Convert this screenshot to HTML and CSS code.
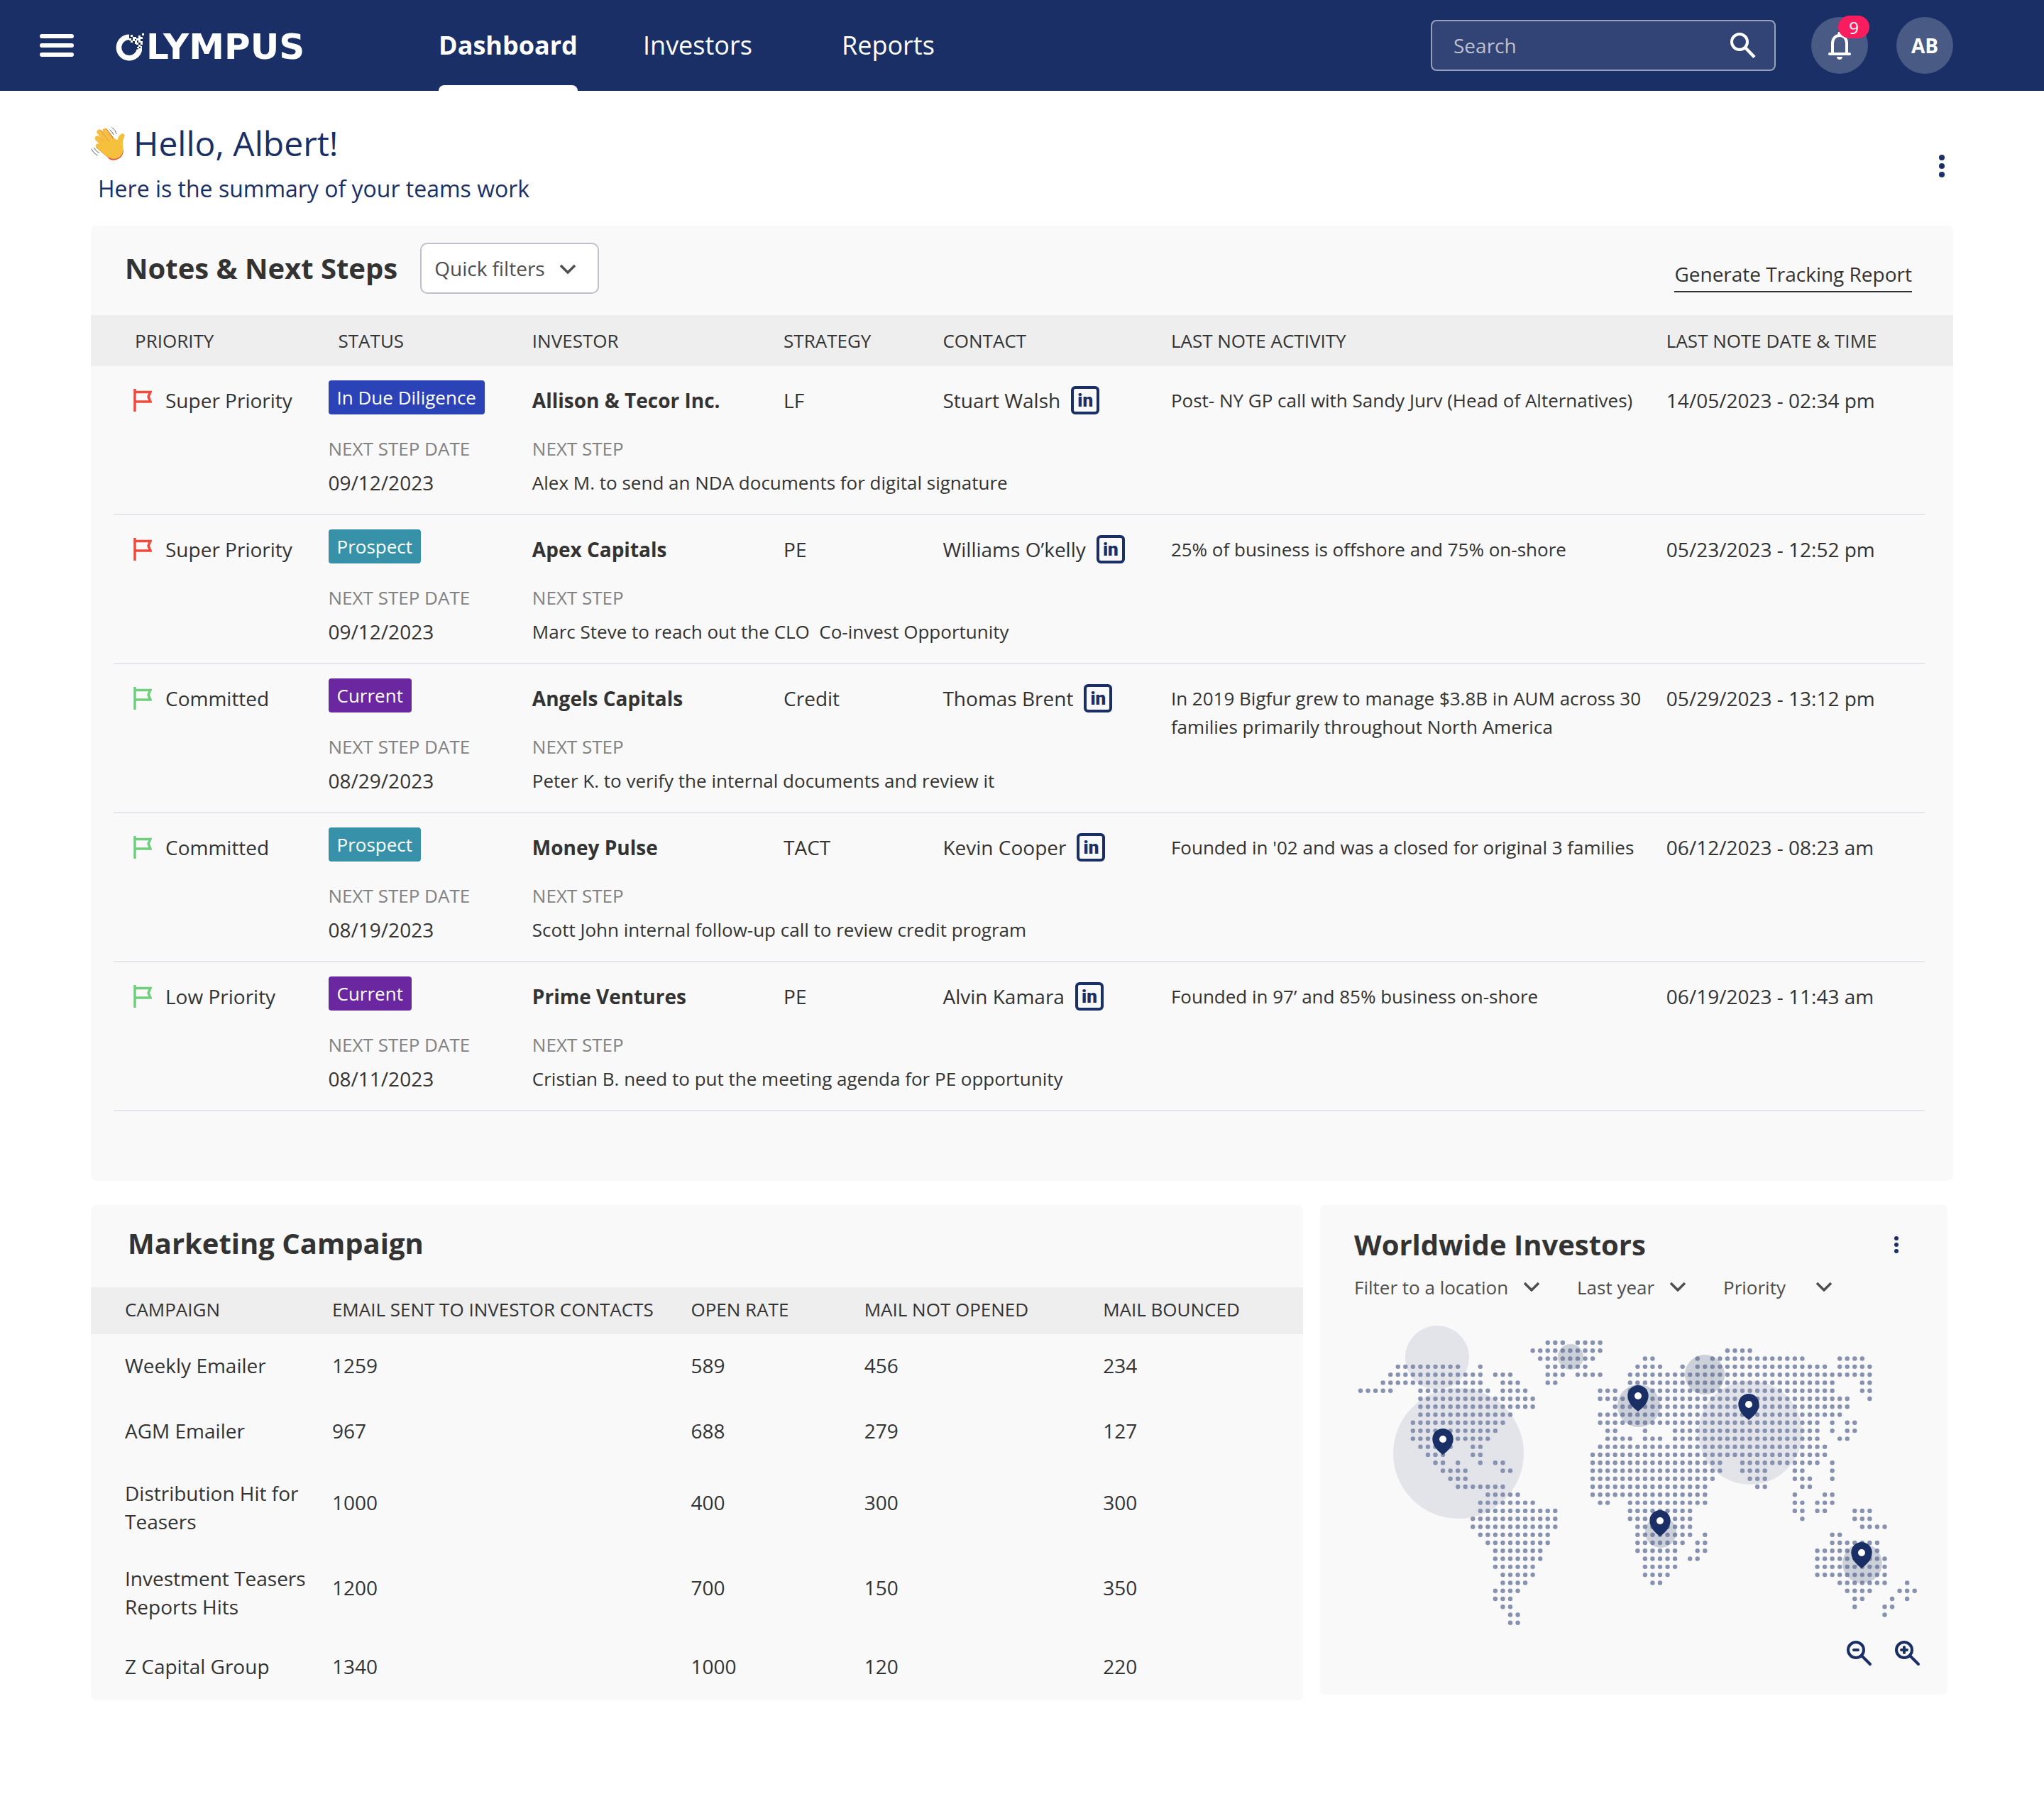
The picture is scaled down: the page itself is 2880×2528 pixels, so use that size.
FILE: index.html
```html
<!DOCTYPE html>
<html lang="en">
<head>
  <meta charset="UTF-8">
  <meta name="viewport" content="width=device-width, initial-scale=1.0">
  <title>Olympus - Dashboard</title>
  <link rel="stylesheet" href="styles.css">
</head>
<body>
  <!-- shared icons -->
  <svg class="sprite" aria-hidden="true">
    <symbol id="icon-flag" viewBox="0 0 26 32">
      <path d="M2 0v32M2 4.500h22l-3 6.500 3 7H2" fill="none" stroke="currentColor" stroke-width="3.500"/>
    </symbol>
    <symbol id="icon-chevron" viewBox="0 0 24 14">
      <path d="M2 2l10 10L22 2" fill="none" stroke="currentColor" stroke-width="3.500"/>
    </symbol>
    <symbol id="icon-dots" viewBox="0 0 8 32">
      <circle cx="4" cy="4" r="4"/><circle cx="4" cy="16" r="4"/><circle cx="4" cy="28" r="4"/>
    </symbol>
    <symbol id="icon-pin" viewBox="0 0 30 37">
      <path d="M15 0C6.800 0 0.300 6.600 0.300 14.700c0 5 2 9.300 5 13.200C8 31.300 12 34.500 15 37c3-2.500 7-5.700 9.700-9.100 3-3.900 5-8.200 5-13.200C29.700 6.600 23.200 0 15 0z" fill="#1b2f67"/>
      <circle cx="15" cy="15" r="5" fill="#fff"/>
    </symbol>
  </svg>

  <header class="topbar">
    <button class="menu-btn" type="button" aria-label="Menu">
      <span></span><span></span><span></span>
    </button>
    <a class="logo" href="#" aria-label="Olympus">
      <svg class="logo-mark" viewBox="0 0 42 42" aria-hidden="true">
        <path d="M20 7.300A14.700 14.700 0 1 0 34.500 25" fill="none" stroke="#fff" stroke-width="7.500"/>
        <path fill="#fff" d="M38 2h3v3h-3zM33 5h3v3h-3zM22 4h3v3h-3zM25 7h5v3h-5zM36 7h3v3h-3zM20 9h3v3h-3zM30 9h3v3h-3zM33 8h3v5h-3zM25 10h3v3h-3zM28 12h3v3h-3zM33 13h6v2h-6zM22 12h3v3h-3zM30 15h3v3h-3zM36 15h3v3h-3zM33 18h3v3h-3zM28 15h2v2h-2zM36 20h2v3h-2zM31 21h3v2h-3zM33 23h5v3h-5z"/>
      </svg>
      <span class="logo-text">LYMPUS</span>
    </a>
    <nav class="main-nav">
      <a class="active" href="#">Dashboard</a>
      <a href="#">Investors</a>
      <a href="#">Reports</a>
    </nav>
    <div class="search-box">
      <label class="sr-only" for="search">Search</label>
      <input type="text" id="search" placeholder="Search">
      <button type="button" aria-label="Search">
        <svg width="36" height="36" viewBox="0 0 36 36"><circle cx="13" cy="13" r="11" fill="none" stroke="#fff" stroke-width="4"/><path d="M20.500 20.500L34 34.500" stroke="#fff" stroke-width="4.500"/></svg>
      </button>
    </div>
    <button class="round-btn bell" type="button" aria-label="Notifications">
      <svg width="32" height="40" viewBox="0 0 32 40">
        <path d="M6 31V17C6 10 10.500 6 16 6s10 4 10 11v14" fill="none" stroke="#fff" stroke-width="4"/>
        <path d="M2 32h28" stroke="#fff" stroke-width="4" stroke-linecap="round"/>
        <path d="M13 6l1-5h4l1 5zM12 36h8c0 2.500-2 4-4 4s-4-1.500-4-4z" fill="#fff"/>
      </svg>
      <span class="count">9</span>
    </button>
    <button class="round-btn avatar" type="button">AB</button>
  </header>

  <main class="page">
    <section class="greeting">
      <div>
        <h1>
          <svg class="wave" viewBox="24 28 150 148" aria-hidden="true">
            <path d="M118 173c24 0 43-16 44-42l-8-10-60 40c8 8 15 12 24 12z" fill="#ef4f3c"/>
            <g stroke="#ef4f3c" stroke-width="20" stroke-linecap="round">
              <path d="M61 54l40 54M85 49l36 48M53 82l42 42M56 115l40 34"/>
            </g>
            <g stroke="#f5c03c" stroke-width="19" stroke-linecap="round" fill="#f5c03c">
              <path d="M59 54l42 56M83 48l36 52M51 80l44 48M54 113l40 34"/>
              <path d="M158 69c-10 6-14 18-15 33l-24-14-28 30 2 28c14 14 38 18 50 4 12-12 10-34 7-48 0-12 3-22 8-33z" stroke-width="17" stroke-linejoin="round"/>
            </g>
            <g fill="none" stroke="#666" stroke-width="3" stroke-linecap="round">
              <path d="M104 45q12 8 16 20M114 35q14 10 18 26M26 126q8 18 26 27M37 121q8 14 22 22"/>
            </g>
          </svg>
          Hello, Albert!
        </h1>
        <p>Here is the summary of your teams work</p>
      </div>
      <button class="dots-btn" type="button" aria-label="More options">
        <svg width="8" height="32"><use href="#icon-dots"/></svg>
      </button>
    </section>

    <section class="panel notes">
      <div class="panel-header">
        <h2>Notes &amp; Next Steps</h2>
        <div class="select-box boxed">
          <label class="sr-only" for="quick-filters">Quick filters</label>
          <select id="quick-filters">
            <option>Quick filters</option>
          </select>
          <svg class="chevron"><use href="#icon-chevron"/></svg>
        </div>
        <a class="report-link" href="#">Generate Tracking Report</a>
      </div>

      <table class="notes-table">
        <colgroup>
          <col class="col-priority">
          <col class="col-status">
          <col class="col-investor">
          <col class="col-strategy">
          <col class="col-contact">
          <col class="col-activity">
          <col class="col-date">
        </colgroup>
        <thead>
          <tr>
            <th>PRIORITY</th>
            <th>STATUS</th>
            <th>INVESTOR</th>
            <th>STRATEGY</th>
            <th>CONTACT</th>
            <th>LAST NOTE ACTIVITY</th>
            <th>LAST NOTE DATE &amp; TIME</th>
          </tr>
        </thead>
        <tbody>
          <tr class="record">
            <td rowspan="2"><span class="priority"><svg class="flag red"><use href="#icon-flag"/></svg>Super Priority</span></td>
            <td class="status"><span class="badge diligence">In Due Diligence</span></td>
            <td class="investor">Allison &amp; Tecor Inc.</td>
            <td>LF</td>
            <td><span class="contact">Stuart Walsh <a class="linkedin" href="#">in</a></span></td>
            <td class="activity" rowspan="2">Post- NY GP call with Sandy Jurv (Head of Alternatives)</td>
            <td rowspan="2">14/05/2023 - 02:34 pm</td>
          </tr>
          <tr class="next-step">
            <td><span class="caption">NEXT STEP DATE</span><span class="date">09/12/2023</span></td>
            <td colspan="3"><span class="caption">NEXT STEP</span><span class="step">Alex M. to send an NDA documents for digital signature</span></td>
          </tr>
        </tbody>
        <tbody>
          <tr class="record">
            <td rowspan="2"><span class="priority"><svg class="flag red"><use href="#icon-flag"/></svg>Super Priority</span></td>
            <td class="status"><span class="badge prospect">Prospect</span></td>
            <td class="investor">Apex Capitals</td>
            <td>PE</td>
            <td><span class="contact">Williams O’kelly <a class="linkedin" href="#">in</a></span></td>
            <td class="activity" rowspan="2">25% of business is offshore and 75% on-shore</td>
            <td rowspan="2">05/23/2023 - 12:52 pm</td>
          </tr>
          <tr class="next-step">
            <td><span class="caption">NEXT STEP DATE</span><span class="date">09/12/2023</span></td>
            <td colspan="3"><span class="caption">NEXT STEP</span><span class="step">Marc Steve to reach out the CLO&nbsp; Co-invest Opportunity</span></td>
          </tr>
        </tbody>
        <tbody>
          <tr class="record">
            <td rowspan="2"><span class="priority"><svg class="flag green"><use href="#icon-flag"/></svg>Committed</span></td>
            <td class="status"><span class="badge current">Current</span></td>
            <td class="investor">Angels Capitals</td>
            <td>Credit</td>
            <td><span class="contact">Thomas Brent <a class="linkedin" href="#">in</a></span></td>
            <td class="activity" rowspan="2">In 2019 Bigfur grew to manage $3.8B in AUM across 30 families primarily throughout North America</td>
            <td rowspan="2">05/29/2023 - 13:12 pm</td>
          </tr>
          <tr class="next-step">
            <td><span class="caption">NEXT STEP DATE</span><span class="date">08/29/2023</span></td>
            <td colspan="3"><span class="caption">NEXT STEP</span><span class="step">Peter K. to verify the internal documents and review it</span></td>
          </tr>
        </tbody>
        <tbody>
          <tr class="record">
            <td rowspan="2"><span class="priority"><svg class="flag green"><use href="#icon-flag"/></svg>Committed</span></td>
            <td class="status"><span class="badge prospect">Prospect</span></td>
            <td class="investor">Money Pulse</td>
            <td>TACT</td>
            <td><span class="contact">Kevin Cooper <a class="linkedin" href="#">in</a></span></td>
            <td class="activity" rowspan="2">Founded in '02 and was a closed for original 3 families</td>
            <td rowspan="2">06/12/2023 - 08:23 am</td>
          </tr>
          <tr class="next-step">
            <td><span class="caption">NEXT STEP DATE</span><span class="date">08/19/2023</span></td>
            <td colspan="3"><span class="caption">NEXT STEP</span><span class="step">Scott John internal follow-up call to review credit program</span></td>
          </tr>
        </tbody>
        <tbody>
          <tr class="record">
            <td rowspan="2"><span class="priority"><svg class="flag green"><use href="#icon-flag"/></svg>Low Priority</span></td>
            <td class="status"><span class="badge current">Current</span></td>
            <td class="investor">Prime Ventures</td>
            <td>PE</td>
            <td><span class="contact">Alvin Kamara <a class="linkedin" href="#">in</a></span></td>
            <td class="activity" rowspan="2">Founded in 97’ and 85% business on-shore</td>
            <td rowspan="2">06/19/2023 - 11:43 am</td>
          </tr>
          <tr class="next-step">
            <td><span class="caption">NEXT STEP DATE</span><span class="date">08/11/2023</span></td>
            <td colspan="3"><span class="caption">NEXT STEP</span><span class="step">Cristian B. need to put the meeting agenda for PE opportunity</span></td>
          </tr>
        </tbody>
      </table>
    </section>

    <div class="bottom-row">
      <section class="panel marketing">
        <h2>Marketing Campaign</h2>
        <table class="campaign-table">
          <colgroup>
            <col class="col-campaign">
            <col class="col-sent">
            <col class="col-open">
            <col class="col-unopened">
            <col class="col-bounced">
          </colgroup>
          <thead>
            <tr>
              <th>CAMPAIGN</th>
              <th>EMAIL SENT TO INVESTOR CONTACTS</th>
              <th>OPEN RATE</th>
              <th>MAIL NOT OPENED</th>
              <th>MAIL BOUNCED</th>
            </tr>
          </thead>
          <tbody>
            <tr>
              <td>Weekly Emailer</td>
              <td>1259</td>
              <td>589</td>
              <td>456</td>
              <td>234</td>
            </tr>
            <tr>
              <td>AGM Emailer</td>
              <td>967</td>
              <td>688</td>
              <td>279</td>
              <td>127</td>
            </tr>
            <tr class="two-line">
              <td>Distribution Hit for Teasers</td>
              <td>1000</td>
              <td>400</td>
              <td>300</td>
              <td>300</td>
            </tr>
            <tr class="two-line">
              <td>Investment Teasers Reports Hits</td>
              <td>1200</td>
              <td>700</td>
              <td>150</td>
              <td>350</td>
            </tr>
            <tr>
              <td>Z Capital Group</td>
              <td>1340</td>
              <td>1000</td>
              <td>120</td>
              <td>220</td>
            </tr>
          </tbody>
        </table>
      </section>

      <section class="panel worldwide">
        <div class="world-header">
          <h2>Worldwide Investors</h2>
          <button class="dots-btn" type="button" aria-label="Map options">
            <svg width="6" height="24"><use href="#icon-dots"/></svg>
          </button>
        </div>
        <div class="map-filters">
          <div class="select-box location">
            <label class="sr-only" for="location">Location</label>
            <select id="location"><option>Filter to a location</option></select>
            <svg class="chevron"><use href="#icon-chevron"/></svg>
          </div>
          <div class="select-box">
            <label class="sr-only" for="period">Period</label>
            <select id="period"><option>Last year</option></select>
            <svg class="chevron"><use href="#icon-chevron"/></svg>
          </div>
          <div class="select-box">
            <label class="sr-only" for="map-priority">Priority</label>
            <select id="map-priority"><option>Priority</option></select>
            <svg class="chevron"><use href="#icon-chevron"/></svg>
          </div>
        </div>
        <svg class="world-map" viewBox="0 0 800 440" role="img" aria-label="Investors by location">
          <g fill="#1b2f67" fill-opacity="0.100">
            <circle cx="117" cy="47" r="45"/>
            <circle cx="147" cy="182" r="92"/>
            <circle cx="558" cy="153" r="73"/>
          </g>
          <g id="map-dots" fill="#8791b0"></g>
          <g fill="#64718f" fill-opacity="0.300">
            <circle cx="305" cy="46" r="18"/>
            <circle cx="401" cy="115" r="30"/>
            <circle cx="494" cy="71" r="28"/>
            <circle cx="432" cy="293" r="22"/>
            <circle cx="716" cy="337" r="28"/>
          </g>
          <use href="#icon-pin" x="110" y="147" width="30" height="37"/>
          <use href="#icon-pin" x="385" y="86" width="30" height="37"/>
          <use href="#icon-pin" x="541" y="98" width="30" height="37"/>
          <use href="#icon-pin" x="416" y="262" width="30" height="37"/>
          <use href="#icon-pin" x="700" y="307" width="30" height="37"/>
        </svg>
        <div class="zoom-buttons">
          <button type="button" aria-label="Zoom out">
            <svg width="36" height="36" viewBox="0 0 36 36" fill="none" stroke="#1b2f67" stroke-width="4" stroke-linecap="round"><circle cx="13" cy="13" r="11"/><path d="M21 21l12 12M10 13h6"/></svg>
          </button>
          <button type="button" aria-label="Zoom in">
            <svg width="36" height="36" viewBox="0 0 36 36" fill="none" stroke="#1b2f67" stroke-width="4" stroke-linecap="round"><circle cx="13" cy="13" r="11"/><path d="M21 21l12 12M9 13h8M13 9v8"/></svg>
          </button>
        </div>
      </section>
    </div>
  </main>
  <script src="map.js"></script>
</body>
</html>
```
FILE: styles.css
```css
* {
  box-sizing: border-box;
}

body {
  margin: 0;
  background-color: #fff;
  color: #333;
  font-family: "Open Sans", "Noto Sans", sans-serif;
  font-size: 28px;
  line-height: 40px;
}

h1, h2, p {
  margin: 0;
}

button {
  padding: 0;
  border: none;
  background: none;
  font-family: inherit;
  cursor: pointer;
}

svg {
  display: block;
}

.sprite {
  position: absolute;
  width: 0;
  height: 0;
}

.sr-only {
  position: absolute;
  opacity: 0;
  pointer-events: none;
  white-space: nowrap;
}

/* top bar */
.topbar {
  display: flex;
  align-items: center;
  height: 128px;
  padding: 0 128px 0 56px;
  background-color: #1b2f67;
  color: #fff;
}

.menu-btn {
  display: flex;
  flex-direction: column;
  justify-content: space-between;
  width: 48px;
  height: 32px;
  margin-right: 58px;
}

.menu-btn span {
  height: 6px;
  border-radius: 3px;
  background-color: #fff;
}

.logo {
  display: flex;
  align-items: center;
  gap: 2px;
  min-width: 456px;
  padding-top: 4px;
  color: #fff;
  text-decoration: none;
}

.logo-mark {
  width: 42px;
  height: 42px;
}

.logo-text {
  font-family: "DejaVu Sans", sans-serif;
  font-size: 50px;
  font-weight: 700;
  line-height: 60px;
}

.main-nav {
  display: grid;
  grid-template-columns: 288px 280px auto;
  justify-items: start;
  align-self: stretch;
}

.main-nav a {
  display: flex;
  align-items: center;
  color: #fff;
  font-size: 36px;
  text-decoration: none;
}

.main-nav .active {
  position: relative;
  font-weight: 700;
}

.main-nav .active::after {
  content: "";
  position: absolute;
  left: 0;
  right: 0;
  bottom: 0;
  height: 8px;
  border-radius: 8px 8px 0 0;
  background-color: #fff;
}

.search-box {
  display: flex;
  align-items: center;
  width: 486px;
  height: 72px;
  margin-left: auto;
  margin-right: 50px;
  padding: 0 26px 0 30px;
  border: 2px solid #98a1bb;
  border-radius: 8px;
  background-color: rgba(255, 255, 255, 0.1);
}

.search-box input {
  flex: 1;
  min-width: 0;
  height: 100%;
  padding: 0;
  border: none;
  outline: none;
  background: none;
  color: #fff;
  font-family: inherit;
  font-size: 28px;
}

.search-box input::placeholder {
  color: #bcc1cd;
  opacity: 1;
}

.round-btn {
  display: flex;
  align-items: center;
  justify-content: center;
  width: 80px;
  height: 80px;
  border-radius: 50%;
  background-color: #495a85;
  color: #fff;
}

.bell {
  position: relative;
  margin-right: 40px;
}

.bell .count {
  position: absolute;
  top: -2px;
  right: -2px;
  width: 44px;
  height: 32px;
  border-radius: 16px;
  background-color: #f91c5f;
  font-size: 24px;
  line-height: 34px;
}

.avatar {
  font-size: 28px;
  font-weight: 700;
}

/* page */
.page {
  padding: 42px 128px 128px;
}

.greeting {
  display: flex;
  justify-content: space-between;
  align-items: center;
  margin-bottom: 30px;
  padding-right: 12px;
  color: #1b2f67;
}

.greeting h1 {
  display: flex;
  align-items: center;
  gap: 10px;
  font-size: 48px;
  font-weight: 400;
  line-height: 64px;
}

.greeting p {
  padding: 10px 10px 0;
  font-size: 32px;
  line-height: 44px;
}

.greeting .dots-btn {
  padding-top: 10px;
}

.wave {
  width: 50px;
  height: 50px;
}

.dots-btn {
  fill: #1b2f67;
}

.panel {
  border-radius: 8px;
  background-color: #f9f9f9;
}

h2 {
  font-size: 40px;
  font-weight: 700;
  line-height: 56px;
}

.panel-header {
  display: flex;
  align-items: center;
  gap: 32px;
  padding: 24px 58px 30px 48px;
}

.report-link {
  align-self: flex-end;
  margin-left: auto;
  margin-bottom: 2px;
  padding-bottom: 4px;
  border-bottom: 2px solid #333;
  color: #333;
  text-decoration: none;
}

.select-box {
  position: relative;
  width: 154px;
  color: #4f4f4f;
}

.select-box.location {
  width: 262px;
}

.select-box select {
  display: block;
  width: 100%;
  height: 40px;
  padding: 0;
  border: none;
  background: none;
  appearance: none;
  color: inherit;
  font-family: inherit;
  font-size: 26px;
}

.select-box.boxed {
  width: 252px;
}

.boxed select {
  height: 72px;
  padding: 0 18px;
  border: 2px solid #c0c0cb;
  border-radius: 10px;
  background-color: #fff;
  font-size: 28px;
}

.chevron {
  position: absolute;
  right: 0;
  top: 12px;
  width: 24px;
  height: 14px;
  pointer-events: none;
}

.boxed .chevron {
  right: 32px;
  top: 30px;
}

/* tables */
table {
  width: 100%;
  border-collapse: collapse;
  table-layout: fixed;
}

th {
  padding: 0;
  background-color: #eee;
  font-size: 26px;
  font-weight: 400;
  text-align: left;
  white-space: nowrap;
}

td {
  padding: 0;
}

.notes {
  margin-bottom: 34px;
  padding-bottom: 98px;
}

.notes-table th {
  height: 72px;
}

.notes-table th:first-child {
  padding-left: 62px;
}

.notes-table th:nth-child(2) {
  padding-left: 14px;
}

.notes-table tbody {
  background: linear-gradient(#e6e7ee, #e6e7ee) 32px 100% / calc(100% - 72px) 2px no-repeat;
}

.notes-table td {
  vertical-align: top;
}

.record {
  height: 94px;
}

.record td {
  padding-top: 28px;
}

.record td:first-child {
  padding-left: 60px;
}

.record .status {
  padding-top: 20px;
}

.record .activity {
  padding-right: 24px;
  font-size: 26px;
}

.next-step {
  height: 116px;
}

.col-priority { width: 12.75%; }
.col-status { width: 10.95%; }
.col-investor { width: 13.5%; }
.col-strategy { width: 8.55%; }
.col-contact { width: 12.25%; }
.col-activity { width: 26.6%; }
.col-date { width: 15.4%; }

.priority {
  display: flex;
  align-items: center;
  gap: 19px;
}

.flag {
  width: 26px;
  height: 32px;
}

.flag.red {
  color: #f2493d;
}

.flag.green {
  color: #6fcf7c;
}

.badge {
  display: inline-block;
  padding: 0 12px;
  border-radius: 4px;
  color: #fff;
  font-size: 26px;
  line-height: 48px;
}

.badge.diligence {
  background-color: #2c43b8;
}

.badge.prospect {
  background-color: #3792a9;
}

.badge.current {
  background-color: #6b27a0;
}

.investor {
  font-weight: 700;
}

.contact {
  display: flex;
  align-items: center;
  gap: 15px;
}

.linkedin {
  width: 40px;
  height: 40px;
  border: 4px solid #1b2f67;
  border-radius: 6px;
  color: #1b2f67;
  font-family: Roboto, sans-serif;
  font-size: 26px;
  font-weight: 900;
  line-height: 32px;
  text-align: center;
  text-decoration: none;
}

.caption {
  display: block;
  color: #828282;
  font-size: 26px;
  line-height: 44px;
}

.date, .step {
  display: block;
  line-height: 52px;
}

.step {
  font-size: 26px;
}

.bottom-row {
  display: grid;
  grid-template-columns: 1708fr 884fr;
  gap: 24px;
  align-items: start;
  padding-right: 8px;
}

.marketing h2 {
  padding: 26px 52px 34px;
}

.campaign-table th {
  height: 66px;
  padding-bottom: 4px;
}

.campaign-table td {
  height: 92px;
  padding-bottom: 4px;
}

.campaign-table .two-line td {
  height: 120px;
  padding-bottom: 0;
}

.campaign-table .two-line td + td {
  padding-bottom: 14px;
}

.campaign-table th:first-child, .campaign-table td:first-child {
  padding-left: 48px;
}

.col-campaign { width: 19.9%; }
.col-sent { width: 29.6%; }
.col-open { width: 14.3%; }
.col-unopened { width: 19.7%; }
.col-bounced { width: 16.5%; }

/* worldwide investors */
.worldwide {
  padding: 28px 36px 40px 48px;
}

.world-header {
  display: flex;
  justify-content: space-between;
  align-items: center;
  margin-bottom: 12px;
  padding-right: 33px;
}

.map-filters {
  display: flex;
  gap: 52px;
  margin-bottom: 32px;
}

.world-map {
  width: 100%;
}

.zoom-buttons {
  display: flex;
  justify-content: flex-end;
  gap: 32px;
  padding: 6px 2px 0;
}
```
FILE: map.js
```js
// Dotted world map: every row lists its runs of dots as [first column, last column]
const rows = [
  [[25, 27], [29, 32]],
  [[23, 32], [49, 52]],
  [[24, 31], [38, 39], [45, 45], [47, 59], [64, 67]],
  [[5, 13], [16, 16], [25, 30], [37, 40], [43, 43], [45, 62], [64, 68]],
  [[4, 16], [18, 20], [25, 27], [29, 32], [36, 68]],
  [[3, 16], [19, 21], [25, 26], [36, 63], [67, 68]],
  [[0, 4], [8, 17], [19, 22], [32, 34], [36, 63], [67, 68]],
  [[8, 23], [32, 65], [68, 68]],
  [[8, 23], [34, 65]],
  [[8, 20], [32, 64]],
  [[7, 19], [32, 61], [63, 63], [65, 66]],
  [[7, 18], [33, 34], [38, 38], [42, 61], [63, 63], [65, 66]],
  [[7, 17], [33, 36], [38, 40], [42, 61], [64, 65]],
  [[8, 12], [15, 16], [32, 62]],
  [[9, 11], [15, 16], [31, 62]],
  [[10, 11], [13, 13], [16, 16], [18, 19], [31, 48], [51, 61], [63, 63]],
  [[11, 14], [19, 20], [31, 48], [51, 54], [58, 59], [63, 63]],
  [[12, 14], [31, 47], [52, 54], [58, 60], [63, 63]],
  [[13, 19], [31, 46], [53, 54], [59, 60]],
  [[17, 21], [31, 46], [58, 58], [62, 63]],
  [[16, 23], [32, 33], [36, 46], [58, 59], [61, 63]],
  [[16, 26], [36, 44], [58, 59], [61, 62], [66, 68]],
  [[15, 26], [36, 44], [59, 59], [66, 68]],
  [[15, 26], [37, 44], [67, 70]],
  [[16, 25], [37, 44], [46, 46], [63, 64]],
  [[17, 25], [37, 43], [45, 46], [63, 69]],
  [[18, 24], [37, 42], [45, 46], [61, 69]],
  [[18, 24], [38, 42], [44, 45], [61, 70]],
  [[18, 23], [38, 42], [61, 70]],
  [[19, 23], [38, 41], [61, 70]],
  [[19, 22], [39, 40], [64, 70], [73, 73]],
  [[18, 21], [65, 68], [72, 74]],
  [[18, 20], [66, 67], [71, 71], [73, 73]],
  [[19, 20], [66, 66], [70, 71]],
  [[20, 21], [70, 70]],
  [[20, 21]]
];

const dots = document.getElementById('map-dots');

rows.forEach((runs, row) => {
  runs.forEach(([first, last]) => {
    for (let col = first; col <= last; col++) {
      const dot = document.createElementNS('http://www.w3.org/2000/svg', 'circle');
      dot.setAttribute('cx', 9 + col * 10.55);
      dot.setAttribute('cy', 26 + row * 11.28);
      dot.setAttribute('r', 3.2);
      dots.appendChild(dot);
    }
  });
});
```
